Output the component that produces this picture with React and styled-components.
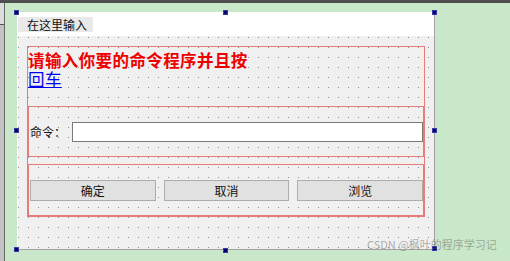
import React from 'react'
import styled, { createGlobalStyle } from 'styled-components'

const GlobalStyle = createGlobalStyle`
  html, body {
    margin: 0;
    padding: 0;
    background: #c9e8c9;
  }
  body {
    font-family: "Noto Sans CJK SC", "Liberation Sans", sans-serif;
  }
`

const Screen = styled.div`
  position: relative;
  width: 510px;
  height: 261px;
  overflow: hidden;
  background: #c9e8c9;
  display: flex;
  flex-direction: column;
`

const TopBar = styled.div`
  height: 3px;
  background: #4e4e4e;
  flex-shrink: 0;
`

const Body = styled.div`
  flex: 1;
  display: flex;
`

const LeftStrip = styled.div`
  width: 5px;
  display: flex;
  flex-direction: column;
  border-right: 1px solid #6a6a6a;
  box-sizing: border-box;
`

const StripTop = styled.div`
  height: 21px;
  background: #dcdcdc;
  border-bottom: 1px solid #555;
`

const StripRest = styled.div`
  flex: 1;
  background: #c3c3c3;
`

const Stage = styled.div`
  position: relative;
  padding: 9px 0 0 12px;
`

const Form = styled.div`
  position: relative;
  width: 418px;
  height: 238px;
  box-sizing: border-box;
  border-left: 1px solid #ffffff;
  border-right: 1px solid #a2a2a2;
  border-bottom: 1px solid #a2a2a2;
  display: flex;
  flex-direction: column;
`

const MenuBar = styled.div`
  height: 24px;
  background: #ffffff;
  padding-top: 5px;
  box-sizing: border-box;
  display: flex;
  align-items: flex-start;
`

const MenuTab = styled.div`
  width: 75px;
  height: 15px;
  background: #e9e9e9;
  padding-left: 9px;
  box-sizing: border-box;
  font-size: 12px;
  line-height: 15px;
  color: #111;
`

const Canvas = styled.div`
  flex: 1;
  background-color: #f0f0f0;
  background-image: radial-gradient(circle at 0.5px 0.5px, #8e8e8e 0.7px, transparent 0.8px);
  background-size: 10px 10px;
  background-position: 0 1px;
  padding: 10px 0 0 9px;
`

const Outer = styled.div`
  width: 398px;
  height: 171px;
  box-sizing: border-box;
  border: 1px solid #e57c7c;
  display: flex;
  flex-direction: column;
`

const Prompt = styled.div`
  width: 232px;
  height: 59px;
  padding-top: 4px;
  box-sizing: border-box;
  font-size: 16.5px;
  font-weight: bold;
  line-height: 19px;
  color: #ee0000;
  letter-spacing: 0.4px;
`

const Enter = styled.span`
  color: #0000ee;
  font-weight: normal;
  text-decoration: underline;
`

const Cell = styled.div`
  height: ${p => p.$h}px;
  box-sizing: border-box;
  border: 1px solid #e57c7c;
  margin-bottom: ${p => p.$gap || 0}px;
  display: flex;
  align-items: center;
  padding-left: 1px;
  gap: ${p => p.$inner || 0}px;
`

const FieldLabel = styled.span`
  width: 42px;
  font-size: 12px;
  color: #111;
`

const Input = styled.input`
  flex: 1;
  height: 20px;
  box-sizing: border-box;
  border: 1px solid #7a7a7a;
  background: #fff;
  outline: none;
  margin: 0;
`

const Button = styled.button`
  flex: 1;
  height: 21px;
  box-sizing: border-box;
  margin: 0;
  padding: 0;
  background: #e1e1e1;
  border: 1px solid #adadad;
  font-family: "Noto Sans CJK SC", sans-serif;
  font-size: 12px;
  color: #111;
`

const Handle = styled.div`
  position: absolute;
  left: ${p => p.$x}px;
  top: ${p => p.$y}px;
  width: 5px;
  height: 5px;
  background: #000070;
  border: 1px solid #3a3aa0;
  box-sizing: border-box;
`

const Watermark = styled.div`
  position: absolute;
  left: 367px;
  top: 236px;
  font-size: 11px;
  color: rgba(110, 110, 110, 0.55);
  white-space: nowrap;
`

const handles = [
  [14, 10], [223, 10], [432, 10],
  [14, 128], [432, 128],
  [14, 247], [223, 248], [432, 246],
]

export default function App() {
  return (
    <Screen>
      <GlobalStyle />
      <TopBar />
      <Body>
        <LeftStrip>
          <StripTop />
          <StripRest />
        </LeftStrip>
        <Stage>
          <Form>
            <MenuBar>
              <MenuTab>在这里输入</MenuTab>
            </MenuBar>
            <Canvas>
              <Outer>
                <Prompt>
                  请输入你要的命令程序并且按<Enter>回车</Enter>
                </Prompt>
                <Cell $h={51} $gap={7}>
                  <FieldLabel>命令：</FieldLabel>
                  <Input />
                </Cell>
                <Cell $h={52} $inner={8}>
                  <Button>确定</Button>
                  <Button>取消</Button>
                  <Button>浏览</Button>
                </Cell>
              </Outer>
            </Canvas>
          </Form>
        </Stage>
      </Body>
      {handles.map(([x, y], i) => (
        <Handle key={i} $x={x} $y={y} />
      ))}
      <Watermark>CSDN @枫叶的程序学习记</Watermark>
    </Screen>
  )
}
